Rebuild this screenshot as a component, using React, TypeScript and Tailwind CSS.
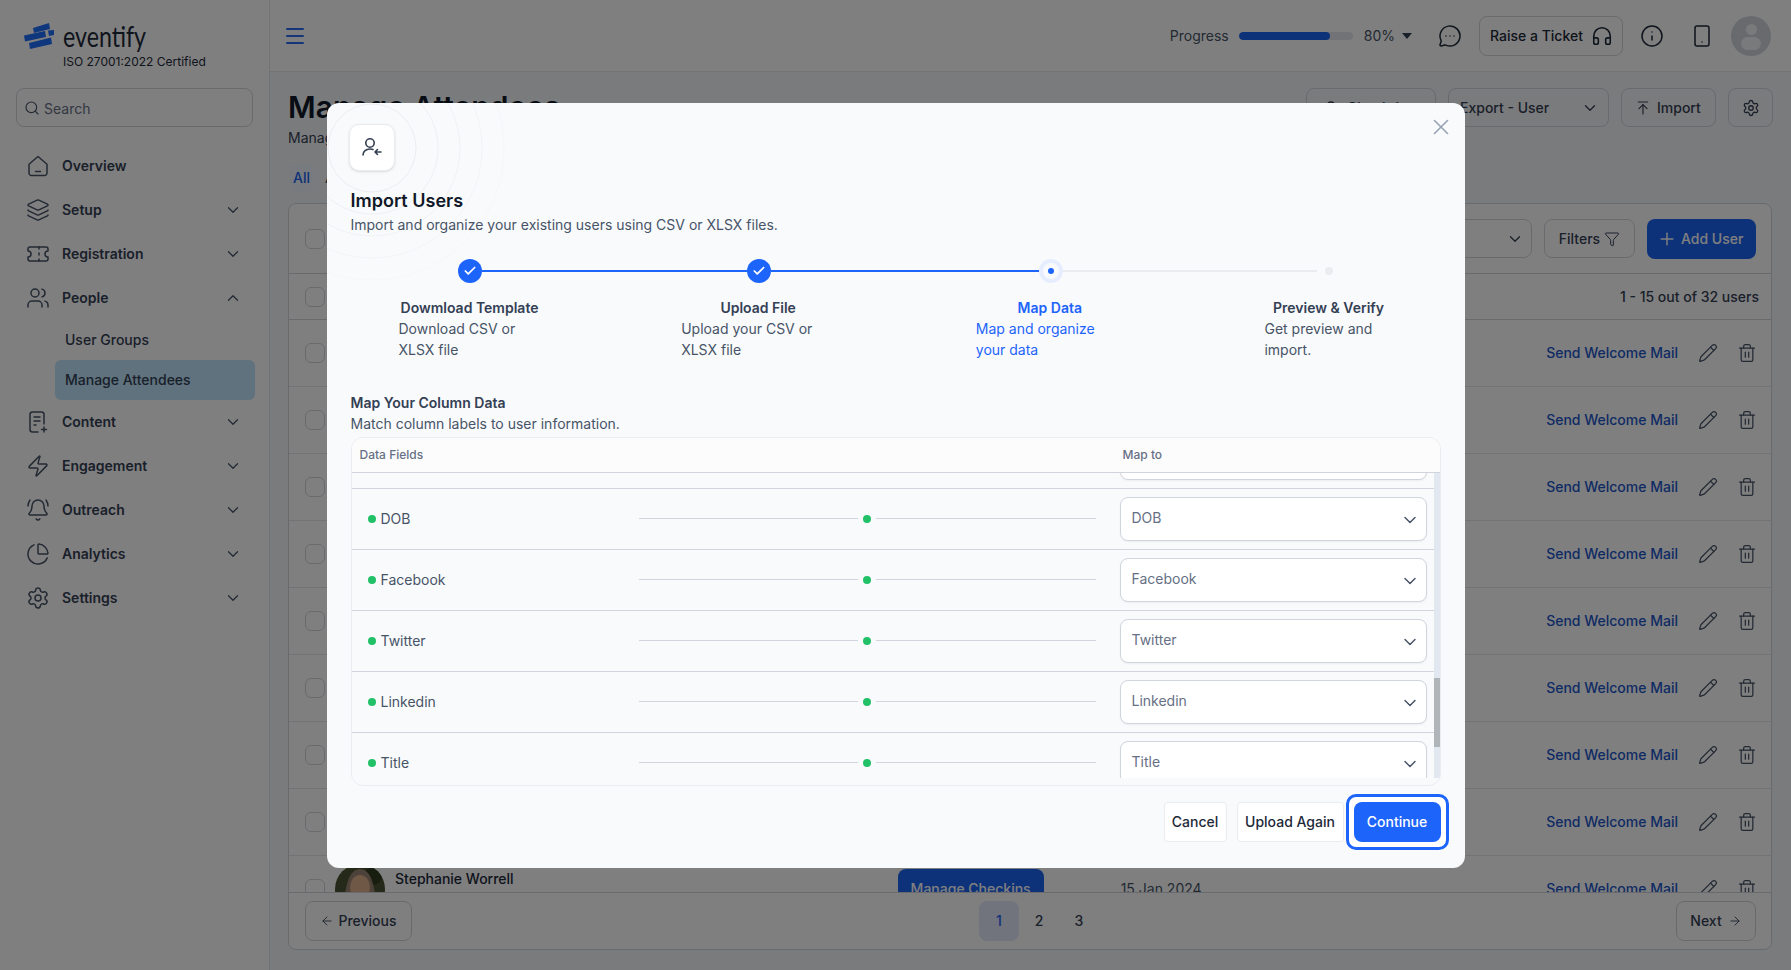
import {
  ArrowLeft,
  ArrowRight,
  ArrowUpToLine,
  BellRing,
  Check,
  ChartPie,
  ChevronDown,
  ChevronUp,
  Funnel,
  Headphones,
  Info,
  Layers,
  Menu,
  MessageCircleMore,
  Pencil,
  Plus,
  Search,
  Settings,
  Smartphone,
  Ticket,
  Trash2,
  UserRound,
  Users,
  X,
  Zap,
} from "lucide-react"

function HomeIcon() {
  return (
    <svg width="24" height="24" viewBox="0 0 24 24" fill="none" stroke="currentColor" strokeWidth="1.5" strokeLinecap="round" strokeLinejoin="round">
      <path d="M3 10.2 12 2.5l9 7.7V19a2.5 2.5 0 0 1-2.5 2.5h-13A2.5 2.5 0 0 1 3 19z" />
      <path d="M9.5 17.5h5" />
    </svg>
  )
}

function ContentIcon() {
  return (
    <svg width="24" height="24" viewBox="0 0 24 24" fill="none" stroke="currentColor" strokeWidth="1.5" strokeLinecap="round" strokeLinejoin="round">
      <path d="M12 22H6.5A2.5 2.5 0 0 1 4 19.5v-15A2.5 2.5 0 0 1 6.5 2h9A2.5 2.5 0 0 1 18 4.5V14" />
      <path d="M8 7h6M8 11h6M8 15h2M18 17v5M15.5 19.5h5" />
    </svg>
  )
}

function Logo() {
  return (
    <svg width="30" height="28" viewBox="0 0 30 28" className="shrink-0">
      <path d="M9 6 25 1l1 6-16 4z" fill="#1f6ffb" />
      <path d="M0 13.5 21 9l1 6-21 4.5z" fill="#1f6ffb" />
      <path d="M24 8.500 30 8v5l-5 1z" fill="#1f6ffb" />
      <path d="M5 21 27 15.500l1 6.500-22 5z" fill="#1f6ffb" />
    </svg>
  )
}

function ImportUserIcon() {
  return (
    <svg width="24" height="24" viewBox="0 0 24 24" fill="none" stroke="#344054" strokeWidth="1.6" strokeLinecap="round" strokeLinejoin="round">
      <circle cx="10" cy="8" r="4.2" />
      <path d="M3 20c0-3.500 3-6 7-6 1 0 2 .15 3 .5" />
      <path d="M21 17h-6M17.500 14.500 15 17l2.500 2.500" />
    </svg>
  )
}

function Rings() {
  return (
    <svg width="200" height="200" viewBox="0 0 200 200" fill="none" className="absolute left-0 top-0">
      <circle cx="45" cy="45" r="44" stroke="#eaecf0" />
      <circle cx="45" cy="45" r="66" stroke="#eaecf0" strokeOpacity="0.8" />
      <circle cx="45" cy="45" r="88" stroke="#eaecf0" strokeOpacity="0.6" />
      <circle cx="45" cy="45" r="110" stroke="#eaecf0" strokeOpacity="0.4" />
      <circle cx="45" cy="45" r="132" stroke="#eaecf0" strokeOpacity="0.2" />
    </svg>
  )
}

function Portrait() {
  return (
    <svg width="50" height="50" viewBox="0 0 50 50" className="shrink-0 rounded-full">
      <rect width="50" height="50" fill="#4a5232" />
      <circle cx="38" cy="12" r="9" fill="#2f3a1e" />
      <path d="M9 50C9 22 14 5 25 5s16 17 16 45z" fill="#9a8574" />
      <ellipse cx="25" cy="23" rx="10" ry="12" fill="#e0b08f" />
    </svg>
  )
}

const navTop = [
  { label: "Overview", icon: <HomeIcon />, arrow: false },
  { label: "Setup", icon: <Layers size={24} strokeWidth={1.5} />, arrow: true },
  { label: "Registration", icon: <Ticket size={24} strokeWidth={1.5} />, arrow: true },
]

const navBottom = [
  { label: "Content", icon: <ContentIcon /> },
  { label: "Engagement", icon: <Zap size={24} strokeWidth={1.5} /> },
  { label: "Outreach", icon: <BellRing size={24} strokeWidth={1.5} /> },
  { label: "Analytics", icon: <ChartPie size={24} strokeWidth={1.5} /> },
  { label: "Settings", icon: <Settings size={24} strokeWidth={1.5} /> },
]

const steps = [
  { title: "Dowmload Template", desc: "Download CSV or XLSX file", width: "w-[142px]", active: false },
  { title: "Upload File", desc: "Upload your CSV or XLSX file", width: "w-[154px]", active: false },
  { title: "Map Data", desc: "Map and organize your data", width: "w-[148px]", active: true },
  { title: "Preview & Verify", desc: "Get preview and import.", width: "w-[128px]", active: false },
]

const fields = ["", "DOB", "Facebook", "Twitter", "Linkedin", "Title"]

function NavRow({ label, icon, arrow, up }: { label: string; icon: React.ReactNode; arrow?: boolean; up?: boolean }) {
  return (
    <div className="flex h-11 items-center pl-[26px] pr-[27px] text-[#344054]">
      <span className="flex w-9 shrink-0 text-[#475467]">{icon}</span>
      <span className="flex-1 text-sm font-semibold">{label}</span>
      {arrow && (up ? <ChevronUp size={18} strokeWidth={1.75} className="text-[#475467]" /> : <ChevronDown size={18} strokeWidth={1.75} className="text-[#475467]" />)}
    </div>
  )
}

function Sidebar() {
  return (
    <aside className="flex h-full w-[270px] shrink-0 flex-col border-r border-[#e4e7ec] bg-white">
      <div className="flex items-center gap-[9px] pl-6 pt-5">
        <Logo />
        <span className="origin-left scale-x-[0.8] font-[family-name:Lato,sans-serif] text-[29px] leading-8 text-[#1d2939]">eventify</span>
      </div>
      <div className="mt-[2px] pl-[63px] text-xs leading-4 text-[#1d2939]">ISO 27001:2022 Certified</div>
      <div className="mx-4 mt-[18px] flex h-[39px] items-center gap-1 rounded-lg border border-[#d0d5dd] pl-[7px]">
        <Search size={16} strokeWidth={1.75} className="text-[#475467]" />
        <span className="mt-0.5 text-sm text-[#667085]">Search</span>
      </div>
      <nav className="mt-[17px] flex flex-col">
        {navTop.map((n) => (
          <NavRow key={n.label} label={n.label} icon={n.icon} arrow={n.arrow} />
        ))}
        <NavRow label="People" icon={<Users size={24} strokeWidth={1.5} />} arrow up />
        <div className="flex h-10 items-center pl-[65px] text-sm font-medium text-[#344054]">User Groups</div>
        <div className="ml-[55px] mr-[14px] flex h-10 items-center rounded-md bg-[#bee5fb] pl-[10px] text-sm font-medium text-[#344054]">Manage Attendees</div>
        {navBottom.map((n) => (
          <NavRow key={n.label} label={n.label} icon={n.icon} arrow />
        ))}
      </nav>
    </aside>
  )
}

function TopBar() {
  return (
    <header className="flex h-[72px] shrink-0 items-center border-b border-[#e4e7ec] bg-white pl-[13px] pr-5">
      <Menu size={24} strokeWidth={2} className="text-[#2a6cf0]" />
      <span className="ml-auto text-sm text-[#475467]">Progress</span>
      <div className="ml-[10px] h-2 w-[114px] overflow-hidden rounded-full bg-[#e4e7ec]">
        <div className="h-2 w-[80%] rounded-full bg-[#1c64f2]" />
      </div>
      <span className="ml-[11px] text-sm text-[#475467]">80%</span>
      <span className="ml-[7px] h-0 w-0 border-x-[5px] border-t-[6px] border-x-transparent border-t-[#344054]" />
      <MessageCircleMore size={24} strokeWidth={1.5} className="ml-[26px] text-[#1d2939]" />
      <button className="ml-[17px] flex h-10 w-[144px] items-center justify-between rounded-lg border border-[#d0d5dd] pl-[10px] pr-[9px] text-sm font-medium text-[#1d2939]">
        Raise a Ticket
        <Headphones size={22} strokeWidth={1.75} />
      </button>
      <Info size={24} strokeWidth={1.5} className="ml-[17px] text-[#1d2939]" />
      <Smartphone size={24} strokeWidth={1.5} className="ml-[26px] text-[#1d2939]" />
      <div className="relative ml-[17px] flex h-10 w-10 flex-col items-center overflow-hidden rounded-full bg-[#d0d5dd]">
        <div className="mt-[8px] h-[11px] w-[11px] rounded-full bg-[#f2f4f7]" />
        <div className="mt-[2px] h-[13px] w-[20px] rounded-full bg-[#f2f4f7]" />
      </div>
    </header>
  )
}

function OutlineButton({ children, className }: { children: React.ReactNode; className: string }) {
  return <button className={"flex h-[39px] items-center rounded-lg border border-[#d0d5dd] text-sm font-medium text-[#344054] " + className}>{children}</button>
}

function Checkbox() {
  return <span className="h-5 w-5 shrink-0 rounded-md border border-[#d0d5dd] bg-white" />
}

function UserRow({ extra }: { extra?: boolean }) {
  return (
    <div className="flex h-[67px] shrink-0 items-center border-b border-[#e4e7ec] pl-4 pr-[14px]">
      <Checkbox />
      {extra && (
        <>
          <div className="ml-[10px]">
            <Portrait />
          </div>
          <span className="mb-5 ml-[10px] text-sm font-medium text-[#1d2939]">Stephanie Worrell</span>
          <button className="ml-[384px] flex h-10 w-[146px] items-center justify-center rounded-lg bg-[#1c64f2] text-sm font-medium text-white">Manage Checkins</button>
          <span className="ml-[77px] text-sm text-[#475467]">15 Jan 2024</span>
        </>
      )}
      <span className="ml-auto text-sm font-medium text-[#1d56c9]">Send Welcome Mail</span>
      <Pencil size={20} strokeWidth={1.5} className="ml-[20px] text-[#475467]" />
      <Trash2 size={20} strokeWidth={1.5} className="ml-[19px] text-[#475467]" />
    </div>
  )
}

function Page() {
  return (
    <main className="flex h-full min-w-0 flex-1 flex-col bg-[#f5f6f9]">
      <TopBar />
      <div className="flex flex-1 flex-col overflow-hidden pb-[20px] pl-[18px] pr-[19px] pt-4">
        <div className="flex h-[77px] justify-between">
          <div className="pt-px">
            <h1 className="text-3xl font-semibold leading-9 text-[#101828]">Manage Attendees</h1>
            <p className="mt-[3px] text-sm text-[#344054]">Manage all attendees of your event</p>
          </div>
          <div className="-mr-px flex gap-3">
            <OutlineButton className="w-[130px] gap-2 pl-4">
              <UserRound size={16} />
              Check-ins
            </OutlineButton>
            <OutlineButton className="w-[161px] justify-between pl-[11px] pr-[9px]">
              Export - User
              <ChevronDown size={18} strokeWidth={1.75} />
            </OutlineButton>
            <OutlineButton className="w-[95px] gap-1.5 pl-[13px]">
              <ArrowUpToLine size={16} strokeWidth={1.75} />
              Import
            </OutlineButton>
            <OutlineButton className="w-[45px] justify-center">
              <Settings size={18} strokeWidth={1.75} />
            </OutlineButton>
          </div>
        </div>
        <div className="flex h-[26px] items-center gap-3">
          <span className="ml-[2px] flex h-[26px] w-[23px] items-center justify-center rounded bg-[#eff4ff] text-sm font-medium text-[#1c64f2]">All</span>
          <span className="text-sm font-medium text-[#475467]">Active</span>
        </div>
        <div className="mt-3 flex min-h-0 flex-1 flex-col overflow-hidden rounded-lg border border-[#d0d5dd] bg-white">
          <div className="flex h-[70px] shrink-0 items-center border-b border-[#d0d5dd] pl-4 pr-[15px]">
            <Checkbox />
            <OutlineButton className="ml-auto w-[200px] justify-end pr-[7px]">
              <ChevronDown size={18} strokeWidth={1.75} />
            </OutlineButton>
            <OutlineButton className="ml-3 w-[91px] justify-center gap-1">
              Filters
              <Funnel size={16} strokeWidth={1.5} />
            </OutlineButton>
            <button className="ml-3 flex h-10 w-[109px] items-center gap-1 rounded-lg bg-[#1c64f2] pl-2.5 text-sm font-medium text-white">
              <Plus size={20} strokeWidth={1.75} />
              Add User
            </button>
          </div>
          <div className="flex h-[46px] shrink-0 items-center justify-between border-b border-[#d0d5dd] pl-4 pr-3">
            <Checkbox />
            <span className="text-sm font-medium text-[#344054]">1 - 15 out of 32 users</span>
          </div>
          <div className="flex min-h-0 flex-1 flex-col overflow-hidden">
            {[0, 1, 2, 3, 4, 5, 6, 7].map((i) => (
              <UserRow key={i} />
            ))}
            <UserRow extra />
          </div>
          <div className="flex h-[57px] shrink-0 items-center border-t border-[#d0d5dd] pl-4 pr-[15px]">
            <button className="flex h-10 w-[107px] items-center justify-center gap-1 rounded-lg border border-[#d0d5dd] text-sm font-medium text-[#344054]">
              <ArrowLeft size={14} strokeWidth={1.5} />
              Previous
            </button>
            <div className="ml-[567px] flex text-sm font-medium text-[#344054]">
              <span className="flex h-10 w-10 items-center justify-center rounded-lg bg-[#e2e8f8] text-[#1c64f2]">1</span>
              <span className="flex h-10 w-10 items-center justify-center">2</span>
              <span className="flex h-10 w-10 items-center justify-center">3</span>
            </div>
            <button className="ml-auto flex h-10 w-[80px] items-center justify-center gap-1.5 rounded-lg border border-[#d0d5dd] text-sm font-medium text-[#344054]">
              Next
              <ArrowRight size={14} strokeWidth={1.5} />
            </button>
          </div>
        </div>
      </div>
    </main>
  )
}

function Stepper() {
  return (
    <div className="mx-auto mt-6 w-[994px]">
      <div className="flex h-6 items-center pl-[59px]">
        <span className="flex h-6 w-6 items-center justify-center rounded-full bg-[#1d64fb]">
          <Check size={14} strokeWidth={3} className="text-white" />
        </span>
        <span className="h-0.5 w-[265px] bg-[#1d64fb]" />
        <span className="flex h-6 w-6 items-center justify-center rounded-full bg-[#1d64fb]">
          <Check size={14} strokeWidth={3} className="text-white" />
        </span>
        <span className="h-0.5 w-[268px] bg-[#1d64fb]" />
        <span className="flex h-6 w-6 items-center justify-center rounded-full border-4 border-[#e6edfe]">
          <span className="h-1.5 w-1.5 rounded-full bg-[#1d64fb]" />
        </span>
        <span className="h-0.5 w-[254px] bg-[#eaecf0]" />
        <span className="ml-2 h-2 w-2 rounded-full bg-[#eaecf0]" />
      </div>
      <div className="mt-[14px] flex justify-between text-sm leading-[21px]">
        {steps.map((s) => (
          <div key={s.title} className={s.width}>
            <div className={"whitespace-nowrap text-center font-semibold " + (s.active ? "text-[#1d64fb]" : "text-[#344054]")}>{s.title}</div>
            <div className={s.active ? "w-[120px] text-[#1d64fb]" : "pr-4 text-[#475467]"}>{s.desc}</div>
          </div>
        ))}
      </div>
    </div>
  )
}

function MappingRow({ name }: { name: string }) {
  return (
    <div className="flex h-[61px] shrink-0 items-center border-b border-[#d0d5dd] pl-4">
      <div className="flex w-[271px] shrink-0 items-center gap-[5px] text-sm text-[#475467]">
        {name && <span className="h-2 w-2 rounded-full bg-[#22c168]" />}
        {name}
      </div>
      <div className="flex w-[457px] shrink-0 items-center">
        <span className="h-px flex-1 bg-[#d0d5dd]" />
        <span className="mx-[5px] h-2 w-2 rounded-full bg-[#22c168]" />
        <span className="h-px flex-1 bg-[#d0d5dd]" />
      </div>
      <div className="ml-6 flex h-11 w-[307px] shrink-0 items-center justify-between rounded-lg border border-[#d0d5dd] bg-white pl-[11px] pr-[6px] text-sm text-[#667085] shadow-xs">
        <span className="-mt-0.5">{name}</span>
        <ChevronDown size={20} strokeWidth={1.75} className="mt-0.5 text-[#475467]" />
      </div>
    </div>
  )
}

function ImportModal() {
  return (
    <div className="fixed inset-0 flex items-center justify-center bg-black/50">
      <div className="relative flex h-[765px] w-[1138px] flex-col overflow-hidden rounded-xl bg-[#f9fafc] px-6 pt-[21px]">
        <Rings />
        <X size={26} strokeWidth={1.5} className="absolute right-[11px] top-[11px] text-[#98a2b3]" />
        <div className="relative -ml-0.5 flex h-[47px] w-[46px] items-center justify-center rounded-[10px] border border-[#eaecf0] bg-white shadow-sm">
          <ImportUserIcon />
        </div>
        <h2 className="relative mt-4 text-lg font-semibold leading-7 text-[#101828]">Import Users</h2>
        <p className="relative text-sm leading-5 text-[#475467]">Import and organize your existing users using CSV or XLSX files.</p>
        <Stepper />
        <h3 className="mt-[33px] text-sm font-semibold leading-5 text-[#344054]">Map Your Column Data</h3>
        <p className="text-sm leading-[21px] text-[#475467]">Match column labels to user information.</p>
        <div className="mt-[3px] h-[349px] overflow-hidden rounded-xl border border-[#eaecf0]">
          <div className="flex h-[35px] items-center border-b border-[#d0d5dd] bg-[#fcfcfd] pl-2 text-xs font-medium text-[#667085]">
            <span className="w-[763px]">Data Fields</span>
            <span>Map to</span>
          </div>
          <div className="flex h-[305px]">
            <div className="min-w-0 flex-1 overflow-hidden">
              <div className="-mt-[45px]">
                {fields.map((f, i) => (
                  <MappingRow key={i} name={f} />
                ))}
              </div>
            </div>
            <div className="w-1.5 shrink-0 bg-[#e2e8f0]">
              <div className="mt-[205px] h-[69px] bg-[#b0b5ba]" />
            </div>
          </div>
        </div>
        <div className="mt-4 flex justify-end gap-2.5 text-sm font-[450]">
          <button className="h-10 w-[63px] rounded border border-[#eaecf0] bg-white text-[#1d2939]">Cancel</button>
          <button className="h-10 w-[107px] rounded border border-[#eaecf0] bg-white text-[#1d2939]">Upload Again</button>
          <div className="-mx-2 -my-2 rounded-[10px] border-[3px] border-[#1d64fb] bg-white p-[5px]">
            <button className="block h-10 w-[87px] rounded-lg bg-[#1d64fb] text-white">Continue</button>
          </div>
        </div>
      </div>
    </div>
  )
}

export default function App() {
  return (
    <div className="flex h-screen w-full overflow-hidden font-[family-name:Inter,sans-serif]">
      <Sidebar />
      <Page />
      <ImportModal />
    </div>
  )
}
